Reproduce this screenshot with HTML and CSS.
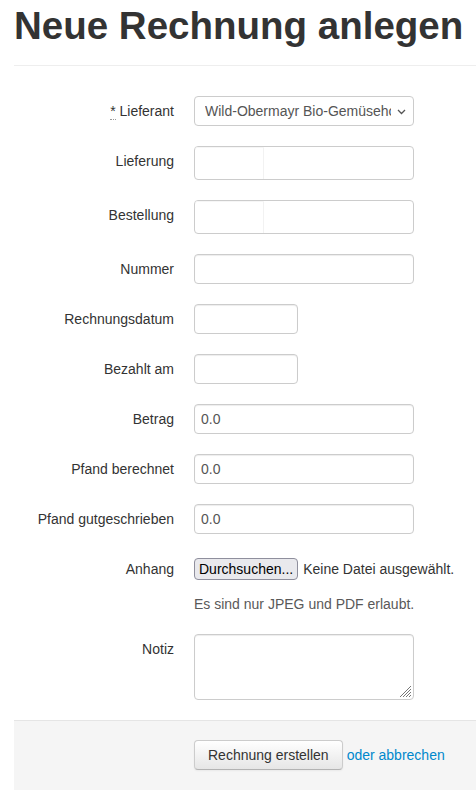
FILE: index.html
```html
<!DOCTYPE html>
<html lang="de">
<head>
<meta charset="utf-8">
<title>Neue Rechnung anlegen</title>
<link rel="stylesheet" href="styles.css">
</head>
<body>
<div class="container">
  <div class="page-header">
    <h1>Neue Rechnung anlegen</h1>
  </div>
  <form class="form-horizontal">
    <div class="control-group">
      <label class="control-label"><abbr title="Pflichtfeld">*</abbr> Lieferant</label>
      <div class="controls">
        <div class="select-wrap">
          <select class="select">
            <option>Wild-Obermayr Bio-Gemüsehof</option>
          </select>
          <svg class="chevron" width="9" height="6" viewBox="0 0 9 6"><path d="M1 1 L4.5 4.5 L8 1" fill="none" stroke="#555" stroke-width="1.3"/></svg>
        </div>
      </div>
    </div>
    <div class="control-group">
      <label class="control-label">Lieferung</label>
      <div class="controls">
        <div class="token-input"><span class="token-inner"></span></div>
      </div>
    </div>
    <div class="control-group">
      <label class="control-label">Bestellung</label>
      <div class="controls">
        <div class="token-input"><span class="token-inner"></span></div>
      </div>
    </div>
    <div class="control-group">
      <label class="control-label">Nummer</label>
      <div class="controls"><input class="input" type="text"></div>
    </div>
    <div class="control-group">
      <label class="control-label">Rechnungsdatum</label>
      <div class="controls"><input class="input input-small" type="text"></div>
    </div>
    <div class="control-group">
      <label class="control-label">Bezahlt am</label>
      <div class="controls"><input class="input input-small" type="text"></div>
    </div>
    <div class="control-group">
      <label class="control-label">Betrag</label>
      <div class="controls"><input class="input" type="text" value="0.0"></div>
    </div>
    <div class="control-group">
      <label class="control-label">Pfand berechnet</label>
      <div class="controls"><input class="input" type="text" value="0.0"></div>
    </div>
    <div class="control-group">
      <label class="control-label">Pfand gutgeschrieben</label>
      <div class="controls"><input class="input" type="text" value="0.0"></div>
    </div>
    <div class="control-group">
      <label class="control-label">Anhang</label>
      <div class="controls">
        <div class="file-line">
          <button type="button" class="file-btn">Durchsuchen...</button>
          <span class="file-name">Keine Datei ausgewählt.</span>
        </div>
        <p class="help-block">Es sind nur JPEG und PDF erlaubt.</p>
      </div>
    </div>
    <div class="control-group">
      <label class="control-label">Notiz</label>
      <div class="controls">
        <div class="textarea-wrap">
          <textarea class="textarea"></textarea>
          <svg class="grip" width="14" height="14" viewBox="0 0 14 14"><g stroke="#777" stroke-width="1"><path d="M13 2 L2 13"/><path d="M13 5 L5 13"/><path d="M13 8 L8 13"/><path d="M13 11 L11 13"/></g></svg>
        </div>
      </div>
    </div>
    <div class="form-actions">
      <button type="button" class="btn">Rechnung erstellen</button>
      <a href="#" class="cancel">oder abbrechen</a>
    </div>
  </form>
</div>
</body>
</html>
```
FILE: styles.css
```css
html, body {
  margin: 0;
  padding: 0;
  background: #fff;
}
body {
  font-family: "Liberation Sans", Arial, sans-serif;
  font-size: 14px;
  line-height: 20px;
  color: #333;
}
.container {
  padding-left: 14px;
}
.page-header {
  padding-bottom: 9px;
  border-bottom: 1px solid #eee;
  margin-bottom: 30px;
}
.page-header h1 {
  margin: 6px 0 10px;
  font-size: 38.5px;
  line-height: 40px;
  font-weight: bold;
  color: #333;
}
.form-horizontal {
  margin: 0;
}
.control-group {
  display: grid;
  grid-template-columns: 160px 1fr;
  column-gap: 20px;
  margin-bottom: 20px;
}
.control-label {
  text-align: right;
  padding-top: 5px;
  line-height: 20px;
}
abbr {
  text-decoration: none;
  border-bottom: 1px dotted #999;
  cursor: help;
}
.controls {
  display: flex;
  flex-direction: column;
  align-items: flex-start;
}
.select-wrap {
  position: relative;
  width: 220px;
  height: 30px;
}
.select {
  appearance: none;
  -webkit-appearance: none;
  box-sizing: border-box;
  width: 220px;
  height: 30px;
  padding: 0 22px 0 10px;
  border: 1px solid #ccc;
  border-radius: 4px;
  background: #fff;
  font-family: "Liberation Sans", Arial, sans-serif;
  font-size: 14px;
  color: #555;
  text-overflow: clip;
  overflow: hidden;
}
.chevron {
  position: absolute;
  right: 8px;
  top: 13px;
  pointer-events: none;
}
.input, .token-input {
  box-sizing: border-box;
  width: 220px;
  height: 30px;
  padding: 4px 6px;
  border: 1px solid #ccc;
  border-radius: 4px;
  background: #fff;
  box-shadow: inset 0 1px 1px rgba(0,0,0,.075);
  font-family: "Liberation Sans", Arial, sans-serif;
  font-size: 14px;
  line-height: 20px;
  color: #555;
}
.input-small {
  width: 104px;
}
.token-input {
  height: 34px;
  padding: 0;
  display: flex;
  box-shadow: none;
}
.token-inner {
  width: 69px;
  height: 100%;
  border-right: 1px solid #f2f2f2;
  border-top: 1px solid #f6f6f6;
  box-sizing: border-box;
  border-radius: 3px 0 0 3px;
}
.file-line {
  height: 30px;
  display: flex;
  align-items: center;
  gap: 5px;
}
.file-btn {
  box-sizing: border-box;
  height: 22px;
  padding: 0 4px;
  margin: 0;
  border: 1px solid #8f8f9d;
  border-radius: 4px;
  background: #e9e9ed;
  font-family: "Liberation Sans", Arial, sans-serif;
  font-size: 14px;
  color: #000;
}
.file-name {
  color: #333;
}
.help-block {
  margin: 10px 0 0;
  color: #595959;
  line-height: 20px;
}
.textarea-wrap {
  position: relative;
  width: 220px;
  height: 66px;
}
.textarea {
  box-sizing: border-box;
  display: block;
  width: 220px;
  height: 66px;
  margin: 0;
  padding: 4px 6px;
  border: 1px solid #ccc;
  border-radius: 4px;
  box-shadow: inset 0 1px 1px rgba(0,0,0,.075);
  resize: none;
  font-family: "Liberation Sans", Arial, sans-serif;
  font-size: 14px;
}
.grip {
  position: absolute;
  right: 2px;
  bottom: 2px;
  pointer-events: none;
}
.form-actions {
  background: #f5f5f5;
  border-top: 1px solid #e5e5e5;
  padding: 19px 20px 20px 180px;
  margin-top: 20px;
  display: flex;
  align-items: center;
  gap: 4px;
}
.btn {
  box-sizing: border-box;
  height: 30px;
  padding: 4px 13px;
  margin: 0;
  border: 1px solid #ccc;
  border-bottom-color: #b3b3b3;
  border-radius: 4px;
  background: linear-gradient(to bottom, #fff, #e6e6e6);
  box-shadow: inset 0 1px 0 rgba(255,255,255,.2), 0 1px 2px rgba(0,0,0,.05);
  font-family: "Liberation Sans", Arial, sans-serif;
  font-size: 14px;
  line-height: 20px;
  color: #333;
}
.cancel {
  color: #0088cc;
  text-decoration: none;
}
```
